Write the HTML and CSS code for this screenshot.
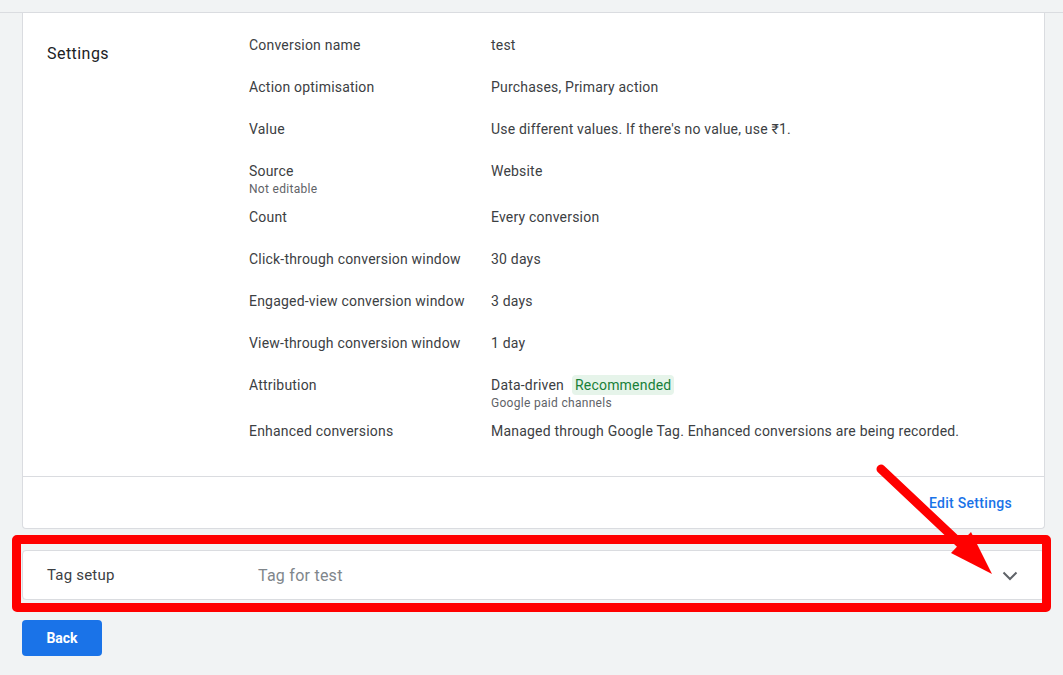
FILE: index.html
```html
<!DOCTYPE html>
<html>
<head>
<meta charset="utf-8">
<link rel="stylesheet" href="styles.css">
</head>
<body>
<div class="topstrip"></div>
<div class="page">
  <div class="card">
    <div class="settings">
      <div class="section-title">Settings</div>
      <div class="rows">
        <div class="row"><div class="label">Conversion name</div><div class="value">test</div></div>
        <div class="row"><div class="label">Action optimisation</div><div class="value">Purchases, Primary action</div></div>
        <div class="row"><div class="label">Value</div><div class="value">Use different values. If there's no value, use ₹1.</div></div>
        <div class="row"><div class="label">Source<div class="sub">Not editable</div></div><div class="value">Website</div></div>
        <div class="row"><div class="label">Count</div><div class="value">Every conversion</div></div>
        <div class="row"><div class="label">Click-through conversion window</div><div class="value">30 days</div></div>
        <div class="row"><div class="label">Engaged-view conversion window</div><div class="value">3 days</div></div>
        <div class="row"><div class="label">View-through conversion window</div><div class="value">1 day</div></div>
        <div class="row"><div class="label">Attribution</div><div class="value"><div class="attr">Data-driven <span class="chip">Recommended</span></div><div class="sub">Google paid channels</div></div></div>
        <div class="row"><div class="label">Enhanced conversions</div><div class="value">Managed through Google Tag. Enhanced conversions are being recorded.</div></div>
      </div>
    </div>
    <div class="footer"><a class="edit">Edit Settings</a></div>
  </div>
  <div class="tagcard">
    <div class="tag-title">Tag setup</div>
    <div class="tag-value">Tag for test</div>
    <svg class="chev" width="16" height="10" viewBox="0 0 16 10"><polyline points="1.5,1.5 8,8 14.5,1.5" fill="none" stroke="#5f6368" stroke-width="2"/></svg>
  </div>
  <button class="back">Back</button>
</div>
<div class="redbox"></div>
<svg class="arrow" width="1063" height="675" viewBox="0 0 1063 675">
  <line x1="881" y1="469" x2="968" y2="551" stroke="#ff0000" stroke-width="9" stroke-linecap="round"/>
  <polygon points="992,574 951,553 971,532" fill="#ff0000"/>
</svg>
</body>
</html>
```
FILE: styles.css
```css
* { box-sizing: border-box; }
html, body { margin: 0; padding: 0; }
body {
  background: #f1f3f4;
  font-family: Roboto, "Liberation Sans", Arial, sans-serif;
  color: #3c4043;
  width: 1063px;
  height: 675px;
  position: relative;
  overflow: hidden;
}
.topstrip {
  height: 13px;
  border-bottom: 1px solid #dadce0;
}
.page {
  padding: 0 18px 0 22px;
}
.card {
  background: #fff;
  border: 1px solid #dadce0;
  border-top: none;
  border-radius: 0 0 4px 4px;
}
.settings {
  display: flex;
  padding: 22px 24px 13px 24px;
  border-bottom: 1px solid #dadce0;
}
.section-title {
  width: 202px;
  flex: none;
  font-size: 16px;
  line-height: 24px;
  margin-top: 7px;
  letter-spacing: 0.45px;
  color: #202124;
}
.rows {
  display: flex;
  flex-direction: column;
}
.row {
  display: flex;
  min-height: 32px;
  margin-bottom: 10px;
  font-size: 14px;
  line-height: 20px;
  letter-spacing: 0.2px;
}
.label {
  width: 242px;
  flex: none;
}
.value { flex: 1; }
.sub {
  font-size: 12px;
  line-height: 16px;
  letter-spacing: 0.3px;
  color: #5f6368;
}
.attr { display: flex; align-items: center; }
.chip {
  display: inline-block;
  margin-left: 8px;
  background: #e6f4ea;
  color: #188038;
  padding: 0 3px;
  border-radius: 4px;
  line-height: 20px;
}
.footer {
  height: 51px;
  display: flex;
  align-items: center;
  justify-content: flex-end;
  padding-right: 32px;
}
.edit {
  color: #1a73e8;
  font-size: 14px;
  font-weight: 500;
  letter-spacing: 0.3px;
  cursor: pointer;
}
.tagcard {
  margin-top: 21px;
  height: 50px;
  background: #fff;
  border: 1px solid #dadce0;
  border-radius: 4px;
  display: flex;
  align-items: center;
  padding: 0 26px 0 24px;
}
.tag-title {
  width: 211px;
  font-size: 15px;
  letter-spacing: 0.2px;
  color: #3c4043;
}
.tag-value {
  flex: 1;
  font-size: 16px;
  letter-spacing: 0.25px;
  color: #80868b;
}
.chev { display: block; margin-top: 2px; }
.back {
  margin-top: 20px;
  width: 80px;
  height: 36px;
  border: none;
  border-radius: 4px;
  background: #1a73e8;
  color: #fff;
  font-family: Roboto, "Liberation Sans", Arial, sans-serif;
  font-size: 14px;
  font-weight: 700;
  padding: 0;
}
.redbox {
  position: absolute;
  left: 12px;
  top: 535px;
  width: 1039px;
  height: 77px;
  border: 9px solid #ff0000;
  border-radius: 5px;
  pointer-events: none;
}
.arrow {
  position: absolute;
  left: 0;
  top: 0;
  pointer-events: none;
}
```
